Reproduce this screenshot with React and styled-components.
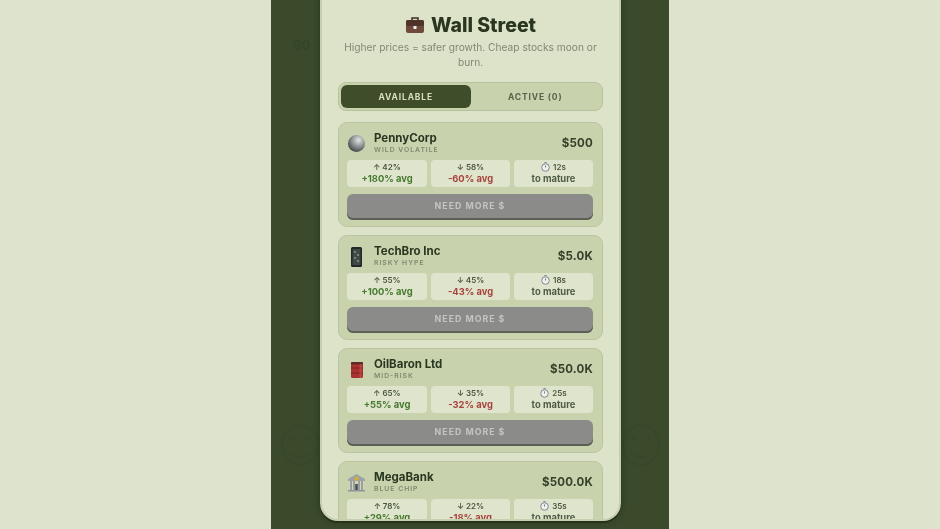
import React from "react";
import styled, { createGlobalStyle } from "styled-components";

const Global = createGlobalStyle`
  html, body { margin: 0; padding: 0; background: #dde3cc; }
  body { font-family: Inter, "Liberation Sans", sans-serif; }
`;

const Page = styled.div`
  width: 940px; height: 529px; overflow: hidden; display: flex; justify-content: center;
  background: #dde3cc; filter: blur(0.6px);
`;
const Column = styled.div`
  position: relative; width: 398px; height: 529px; background: #3a4a2b; display: flex; justify-content: center;
  box-sizing: border-box; padding-left: 1px;
`;
const Ghost = styled.div`
  position: absolute; color: #2f3e22; opacity: .4; font-size: 13px; font-weight: 700; line-height: 16px;
  left: ${p => p.$x}px; top: ${p => p.$y}px;
`;
const Modal = styled.div`
  position: relative; width: 301px; height: 541px; margin-top: -20px; box-sizing: border-box; flex: none;
  background: #dde3c9; border: 2px solid #c6d0ae; border-radius: 18px;
  box-shadow: 0 2px 0 #26321a, 0 0 6px rgba(20,30,10,.45);
  overflow: hidden; padding: 30px 16px 0; display: flex; flex-direction: column; align-items: stretch;
`;
const Title = styled.h1`
  flex: none; margin: 0; display: flex; justify-content: center; align-items: center; gap: 6px;
  font-size: 19.5px; line-height: 26px; font-weight: 800; color: #2a3620;
`;
const Sub = styled.p`
  flex: none; margin: 2px 0 0; text-align: center; font-size: 10.2px; line-height: 15px; color: #7f8a74; padding: 0;
`;
const Tabs = styled.div`
  flex: none; margin-top: 12px; height: 29px; box-sizing: border-box; display: flex; padding: 2px;
  background: #c8d3ae; border: 1px solid #b7c39e; border-radius: 8px;
`;
const Tab = styled.div`
  flex: 1; display: flex; align-items: center; justify-content: center; border-radius: 6px;
  font-size: 8.5px; font-weight: 700; letter-spacing: .85px;
  background: ${p => (p.$active ? "#3f4d2a" : "transparent")};
  color: ${p => (p.$active ? "#d8dfc2" : "#56634a")};
`;
const List = styled.div`
  flex: none; margin-top: 11px; display: flex; flex-direction: column; gap: 8px;
`;
const Card = styled.div`
  flex: none; height: 105px; box-sizing: border-box; padding: 7px 9px 0 8px; border-radius: 9px;
  background: #c8d3ae; border: 1px solid #b9c5a1; display: flex; flex-direction: column;
`;
const Head = styled.div`
  flex: none; height: 29px; display: flex; align-items: center; gap: 8px;
`;
const IconBox = styled.div`
  width: 19px; height: 22px; display: flex; align-items: center; justify-content: center; flex: none; margin-bottom: 2px;
`;
const Names = styled.div`
  flex: 1; display: flex; flex-direction: column; margin-bottom: 5px;
`;
const Name = styled.div`
  font-size: 11.5px; line-height: 14px; font-weight: 700; color: #2a3620;
`;
const Tag = styled.div`
  font-size: 6.8px; line-height: 9px; font-weight: 600; letter-spacing: 1px; color: #7c8a6c;
`;
const Price = styled.div`
  font-size: 11.5px; font-weight: 700; color: #34402a; letter-spacing: .2px; padding-bottom: 4px;
`;
const Stats = styled.div`
  flex: none; margin-top: 1px; display: grid; grid-template-columns: 80px 79px 79px; gap: 4px; height: 27px;
`;
const Stat = styled.div`
  background: #dfe5cd; border-radius: 4px; display: flex; flex-direction: column; align-items: center; justify-content: center;
  font-size: 8px; line-height: 11px; font-weight: 600; color: #4a5640; padding-bottom: 2px; box-sizing: border-box;
`;
const Top = styled.div`
  display: flex; align-items: center; gap: 3px; white-space: nowrap;
`;
const Avg = styled.div`
  font-weight: 700; font-size: 9.4px; white-space: nowrap;
  color: ${p => (p.$tone === "up" ? "#47782f" : p.$tone === "down" ? "#a8423c" : "#4f5b45")};
`;
const Need = styled.div`
  flex: none; margin-top: 7px; height: 26px; box-sizing: border-box; border-radius: 6px; background: #8b8b89;
  box-shadow: inset 0 -2px 0 #5b5f55; display: flex; align-items: center; justify-content: center; padding-bottom: 4px;
  color: #c4c5c0; font-size: 8.8px; font-weight: 700; letter-spacing: 1px;
`;

const Case = () => (
  <svg width="20" height="18" viewBox="0 0 20 18">
    <path d="M7 4V2h6v2" fill="none" stroke="#3c2a22" strokeWidth="1.5" />
    <rect x="1" y="4" width="18" height="13" rx="2" fill="#6d4a3c" />
    <rect x="1" y="4" width="18" height="6" rx="2" fill="#4d3329" />
    <rect x="8.5" y="10" width="3" height="3" fill="#eee" />
  </svg>
);
const Coin = () => (
  <svg width="19" height="19" viewBox="0 0 19 19">
    <defs>
      <radialGradient id="cg" cx="0.62" cy="0.3" r="0.8">
        <stop offset="0" stopColor="#e4e6e4" />
        <stop offset=".5" stopColor="#8b8f90" />
        <stop offset="1" stopColor="#33363a" />
      </radialGradient>
    </defs>
    <circle cx="9.5" cy="9.5" r="8.5" fill="url(#cg)" />
  </svg>
);
const Phone = () => (
  <svg width="13" height="20" viewBox="0 0 13 20">
    <rect x="1" y="0" width="11" height="20" rx="1.5" fill="#23262a" />
    <rect x="2.5" y="2" width="8" height="16" fill="#3e4a44" />
    <path d="M4 5h2M7 8h2M4 11h2M7 14h2" stroke="#8a9488" strokeWidth="1.3" />
  </svg>
);
const Barrel = () => (
  <svg width="14" height="18" viewBox="0 0 14 18">
    <rect x="1" y="1" width="12" height="16" rx="1.5" fill="#a8322f" />
    <rect x="1" y="1" width="12" height="2.5" rx="1" fill="#5e2a25" />
    <path d="M1 7h12M1 12h12" stroke="#7c2322" strokeWidth="1" />
    <rect x="9.5" y="3" width="2" height="14" fill="#c65650" opacity=".6" />
  </svg>
);
const Bank = () => (
  <svg width="19" height="19" viewBox="0 0 19 19">
    <path d="M9.5 1L18 6v2H1V6z" fill="#9aa3a6" />
    <circle cx="9.5" cy="5.6" r="2.2" fill="#d9a93c" />
    <rect x="2" y="8" width="15" height="9" fill="#d8d3bb" />
    <path d="M4 8v9M7 8v9M12 8v9M15 8v9" stroke="#7d8a8f" strokeWidth="1.4" />
    <rect x="8.2" y="11" width="2.6" height="6" fill="#45505a" />
    <rect x="1" y="17" width="17" height="1.5" fill="#8c9598" />
  </svg>
);
const Watch = () => (
  <svg width="9" height="10" viewBox="0 0 9 10">
    <circle cx="4.5" cy="5.5" r="3.8" fill="#eef0ea" stroke="#7c8894" strokeWidth="1" />
    <path d="M3.3 .6h2.4" stroke="#7c8894" strokeWidth="1" />
    <path d="M4.5 5.5V3.4" stroke="#5a626a" strokeWidth=".8" />
  </svg>
);
const Smile = () => (
  <svg width="40" height="44" viewBox="0 0 40 44" fill="none" stroke="#2f3e22" strokeOpacity=".5" strokeWidth="1.5">
    <ellipse cx="20" cy="22" rx="18" ry="20" />
    <path d="M10 30c6 5 14 5 20 0" />
    <circle cx="13" cy="16" r="1.5" />
    <circle cx="27" cy="16" r="1.5" />
  </svg>
);

const stocks = [
  { name: "PennyCorp", tag: "WILD VOLATILE", price: "$500", Icon: Coin, up: "42%", upAvg: "+180% avg", down: "58%", downAvg: "-60% avg", time: "12s" },
  { name: "TechBro Inc", tag: "RISKY HYPE", price: "$5.0K", Icon: Phone, up: "55%", upAvg: "+100% avg", down: "45%", downAvg: "-43% avg", time: "18s" },
  { name: "OilBaron Ltd", tag: "MID-RISK", price: "$50.0K", Icon: Barrel, up: "65%", upAvg: "+55% avg", down: "35%", downAvg: "-32% avg", time: "25s" },
  { name: "MegaBank", tag: "BLUE CHIP", price: "$500.0K", Icon: Bank, up: "78%", upAvg: "+29% avg", down: "22%", downAvg: "-18% avg", time: "35s" },
];

export default function App() {
  return (
    <>
      <Global />
      <Page>
        <Column>
          <Ghost $x={22} $y={37}>90</Ghost>
          <Ghost $x={9} $y={423}><Smile /></Ghost>
          <Ghost $x={350} $y={423}><Smile /></Ghost>
          <Modal>
            <Title><Case />Wall Street</Title>
            <Sub>Higher prices = safer growth. Cheap stocks moon or burn.</Sub>
            <Tabs>
              <Tab $active>AVAILABLE</Tab>
              <Tab>ACTIVE (0)</Tab>
            </Tabs>
            <List>
              {stocks.map(({ Icon, ...s }) => (
                <Card key={s.name}>
                  <Head>
                    <IconBox><Icon /></IconBox>
                    <Names>
                      <Name>{s.name}</Name>
                      <Tag>{s.tag}</Tag>
                    </Names>
                    <Price>{s.price}</Price>
                  </Head>
                  <Stats>
                    <Stat><Top>↑ {s.up}</Top><Avg $tone="up">{s.upAvg}</Avg></Stat>
                    <Stat><Top>↓ {s.down}</Top><Avg $tone="down">{s.downAvg}</Avg></Stat>
                    <Stat><Top><Watch /> {s.time}</Top><Avg>to mature</Avg></Stat>
                  </Stats>
                  <Need>NEED MORE $</Need>
                </Card>
              ))}
            </List>
          </Modal>
        </Column>
      </Page>
    </>
  );
}
